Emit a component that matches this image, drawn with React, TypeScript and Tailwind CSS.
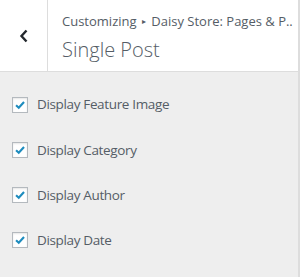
import { useState } from 'react';

const options = ['Display Feature Image', 'Display Category', 'Display Author', 'Display Date'];

function CheckRow({ label }: { label: string }) {
  const [checked, setChecked] = useState(true);
  return (
    <label className="flex items-center h-[45.2px] cursor-pointer" onClick={() => setChecked(!checked)}>
      <span className="w-4 h-4 border border-[#b4b9be] bg-white shadow-[inset_0_1px_2px_rgba(0,0,0,0.1)] flex items-center justify-center">
        {checked && (
          <svg viewBox="0 0 16 16" className="w-4 h-4">
            <path d="M3.5 8.2 L6.6 11.2 L12.6 4.6" fill="none" stroke="#1e8cbe" strokeWidth="2.4" />
          </svg>
        )}
      </span>
      <span className="ml-[9px] text-[13.5px] tracking-[-0.35px] text-[#555d66]">{label}</span>
    </label>
  );
}

export default function App() {
  return (
    <div className="w-[300px] h-[277px] bg-[#eeeeee] border-r-2 border-[#dddddd] font-['Open_Sans',sans-serif] overflow-hidden">
      <div className="flex h-[72px] bg-white border-b border-[#dddddd]">
        <button className="w-[48px] flex items-center justify-center border-r border-[#dddddd]">
          <svg viewBox="0 0 10 14" className="w-[10px] h-[14px] mt-[1px]">
            <path d="M7.5 1.5 L2.5 7 L7.5 12.5" fill="none" stroke="#23282d" strokeWidth="2.4" />
          </svg>
        </button>
        <div className="flex-1 pl-[14px] pt-[11px]">
          <div className="text-[13px] leading-[20px] text-[#555d66] whitespace-nowrap">
            Customizing <span className="text-[8px] relative -top-[2px] mx-[2px]">▸</span> Daisy Store: Pages &amp; P..
          </div>
          <div className="text-[20px] leading-[28px] mt-[3px] text-[#555d66] font-light">Single Post</div>
        </div>
      </div>
      <div className="pl-[12px] pt-[10px]">
        {options.map((o) => (
          <CheckRow key={o} label={o} />
        ))}
      </div>
    </div>
  );
}
